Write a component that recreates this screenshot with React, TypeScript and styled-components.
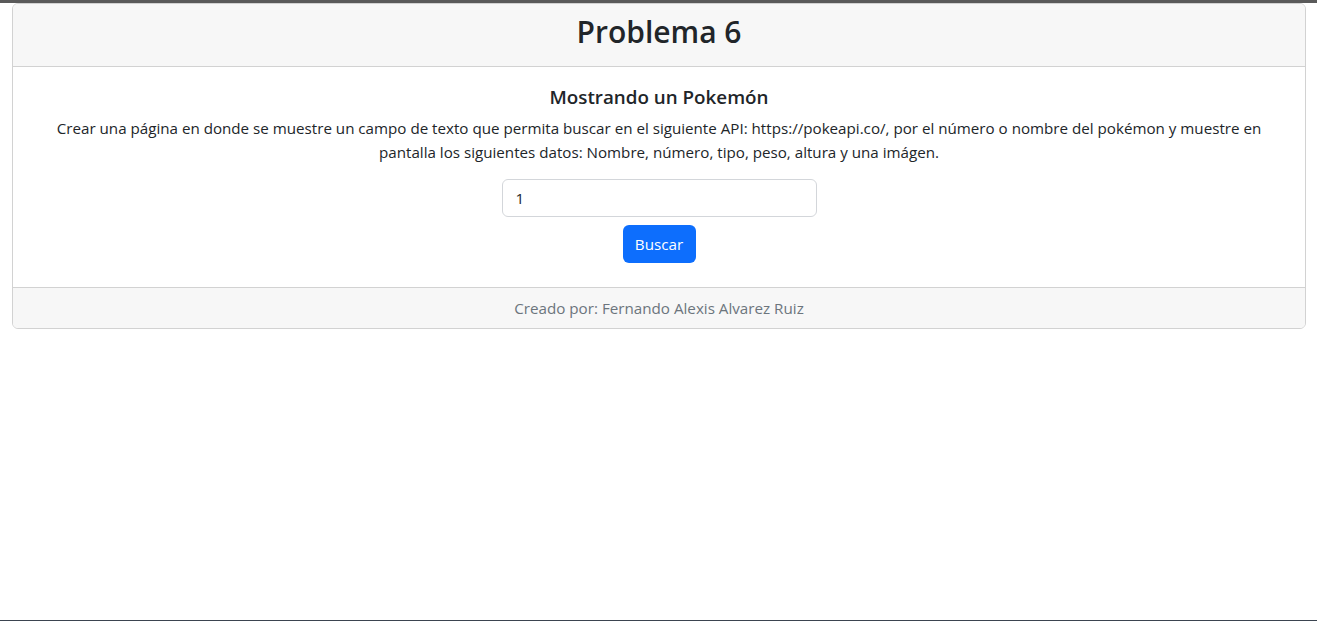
import React from "react";
import styled, { createGlobalStyle } from "styled-components";

const GlobalStyle = createGlobalStyle`
  *, *::before, *::after { box-sizing: border-box; }
  html, body { margin: 0; padding: 0; background: #fff; }
  body {
    font-family: "Open Sans", "Noto Sans", sans-serif;
    font-size: 15.2px;
    line-height: 1.5;
    color: #212529;
  }
`;

const Page = styled.div`
  min-height: 100vh;
  border-top: 3px solid #5a5a5a;
  border-bottom: 1px solid #3b4450;
  padding: 0 11px 0 12px;
`;

const Card = styled.section`
  display: flex;
  flex-direction: column;
  border: 1px solid #d2d2d2;
  border-radius: 6px;
  overflow: hidden;
  text-align: center;
`;

const Header = styled.header`
  background: #f7f7f7;
  border-bottom: 1px solid #d2d2d2;
  padding: 4px 16px 10px;
`;

const Title = styled.h1`
  margin: 0;
  font-size: 30px;
  font-weight: 600;
  line-height: 48px;
`;

const Body = styled.div`
  display: flex;
  flex-direction: column;
  align-items: center;
  padding: 18px 16px 24px;
`;

const Subtitle = styled.h5`
  margin: 0 0 7px;
  font-size: 18.8px;
  font-weight: 600;
  line-height: 24px;
`;

const Text = styled.p`
  margin: 0 0 15px;
  font-size: 15.17px;
  line-height: 24px;
`;

const Input = styled.input`
  width: 315px;
  height: 38px;
  padding: 6px 13px;
  font-family: inherit;
  font-size: 15.2px;
  color: #212529;
  border: 1px solid #d3d6da;
  border-radius: 6px;
  outline: none;
`;

const Button = styled.button`
  margin-top: 8px;
  width: 73px;
  height: 38px;
  padding: 0;
  font-family: inherit;
  font-size: 15.2px;
  color: #fff;
  background: #0d6efd;
  border: none;
  border-radius: 6px;
`;

const Footer = styled.footer`
  background: #f7f7f7;
  border-top: 1px solid #d2d2d2;
  padding: 8px 16px;
  font-size: 15.2px;
  line-height: 24px;
  color: #6c757d;
`;

export default function App() {
  return (
    <>
      <GlobalStyle />
      <Page>
        <Card>
          <Header>
            <Title>Problema 6</Title>
          </Header>
          <Body>
            <Subtitle>Mostrando un Pokemón</Subtitle>
            <Text>
              Crear una página en donde se muestre un campo de texto que permita buscar en el siguiente API: https://pokeapi.co/, por el número o nombre del pokémon y muestre en pantalla los siguientes datos: Nombre, número, tipo, peso, altura y una imágen.
            </Text>
            <Input defaultValue="1" />
            <Button>Buscar</Button>
          </Body>
          <Footer>Creado por: Fernando Alexis Alvarez Ruiz</Footer>
        </Card>
      </Page>
    </>
  );
}
